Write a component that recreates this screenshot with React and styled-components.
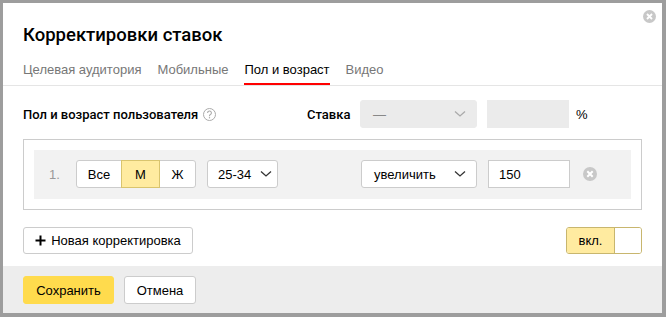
import React from 'react'
import styled, { createGlobalStyle } from 'styled-components';

const GlobalStyle = createGlobalStyle`
    html, body {
        margin: 0;
        padding: 0;
        background: #9d9d9d;
    }
    * {
        box-sizing: border-box;
    }
`;

const Backdrop = styled.div`
    width: 666px;
    height: 317px;
    padding: 3px 4px 4px 3px;
    background: #9d9d9d;
    font-family: "Liberation Sans", Arial, sans-serif;
    font-size: 13px;
    color: #000;
`;

const Modal = styled.div`
    position: relative;
    width: 659px;
    height: 310px;
    background: #fff;
    display: flex;
    flex-direction: column;
`;

const CloseButton = styled.button`
    position: absolute;
    top: 7px;
    right: 6px;
    width: 13px;
    height: 13px;
    padding: 0;
    border: 0;
    background: none;
    display: flex;
`;

const Header = styled.div`
    padding: 21px 20px 0;
    border-bottom: 1px solid #e5e5e5;
`;

const Title = styled.h2`
    margin: 0;
    font-family: Roboto, "Liberation Sans", sans-serif;
    font-size: 18.5px;
    line-height: 22px;
    font-weight: 500;
`;

const Tabs = styled.div`
    display: flex;
    gap: 16px;
    margin-top: 12px;
`;

const Tab = styled.div`
    padding: 4px 0 6px;
    line-height: 15px;
    color: ${({active}) => active ? '#000' : '#777'};
    border-bottom: 2px solid ${({active}) => active ? '#f00' : 'transparent'};
`;

const Body = styled.div`
    padding: 14px 20px 0;
`;

const TopRow = styled.div`
    display: flex;
    align-items: center;
    height: 28px;
`;

const FieldLabel = styled.div`
    flex: 0 0 ${({width}) => width}px;
    display: flex;
    align-items: center;
    gap: 5px;
    font-family: Roboto, "Liberation Sans", sans-serif;
    font-weight: 500;
`;

const Select = styled.div`
    width: ${({width}) => width}px;
    height: 28px;
    border-radius: 3px;
    display: flex;
    align-items: center;
    justify-content: space-between;
    padding: 0 ${({compact}) => compact ? '5px 0 10px' : '10px 0 12px'};
    background: ${({disabled}) => disabled ? '#ebebeb' : '#fff'};
    border: 1px solid ${({disabled}) => disabled ? '#ebebeb' : '#ccc'};
    color: ${({disabled}) => disabled ? '#888' : '#000'};
`;

const Input = styled.div`
    width: 82px;
    height: 28px;
    margin-left: ${({gap}) => gap}px;
    display: flex;
    align-items: center;
    padding: 0 10px;
    background: ${({disabled}) => disabled ? '#ebebeb' : '#fff'};
    border: 1px solid ${({disabled}) => disabled ? '#ebebeb' : '#ccc'};
`;

const Percent = styled.span`
    margin-left: 7px;
`;

const Box = styled.div`
    margin-top: 11px;
    border: 1px solid #ccc;
    padding: 10px;
`;

const RuleRow = styled.div`
    display: flex;
    align-items: center;
    background: #f2f2f2;
    padding: 10px 0 11px 15px;
`;

const Number = styled.span`
    width: 27px;
    color: #999;
`;

const Segments = styled.div`
    display: flex;
    height: 28px;
    margin-right: 11px;
`;

const Segment = styled.div`
    width: ${({width}) => width}px;
    display: flex;
    align-items: center;
    justify-content: center;
    background: ${({active}) => active ? '#ffeba0' : '#fff'};
    border: 1px solid ${({active}) => active ? '#d9c46e' : '#ccc'};
    margin-left: -1px;
    position: relative;
    z-index: ${({active}) => active ? 1 : 0};
    &:first-child {
        margin-left: 0;
        border-radius: 3px 0 0 3px;
    }
    &:last-child {
        border-radius: 0 3px 3px 0;
    }
`;

const Spacer = styled.div`
    flex: 0 0 ${({width}) => width}px;
`;

const RemoveButton = styled.div`
    margin-left: 13px;
    display: flex;
`;

const BottomRow = styled.div`
    display: flex;
    justify-content: space-between;
    align-items: center;
    margin-top: 17px;
`;

const Button = styled.button`
    height: ${({tall}) => tall ? 28 : 27}px;
    width: ${({width}) => width}px;
    padding: 0;
    display: flex;
    align-items: center;
    justify-content: center;
    gap: 5px;
    font-family: inherit;
    font-size: 13px;
    color: #000;
    border-radius: 3px;
    background: ${({primary}) => primary ? '#ffdb4d' : '#fff'};
    border: 1px solid ${({primary}) => primary ? '#ffdb4d' : '#ccc'};
`;

const Toggle = styled.div`
    display: flex;
    width: 76px;
    height: 27px;
    border: 1px solid #c8b66e;
    border-radius: 3px;
    overflow: hidden;
`;

const ToggleOn = styled.div`
    flex: 0 0 48px;
    display: flex;
    align-items: center;
    justify-content: center;
    background: #ffeba0;
    border-right: 1px solid #c8b66e;
`;

const ToggleOff = styled.div`
    flex: 1;
    background: #fff;
`;

const Footer = styled.div`
    margin-top: auto;
    height: 47px;
    background: #ededed;
    display: flex;
    gap: 10px;
    padding: 10px 20px 0;
`;

const Chevron = ({color}) => (
    <svg width="12" height="8" viewBox="0 0 12 8">
        <path d="M1 1.5 L6 6 L11 1.5" fill="none" stroke={color} strokeWidth="1.3" />
    </svg>
);

const ClearIcon = ({size}) => (
    <svg width={size} height={size} viewBox="0 0 14 14">
        <circle cx="7" cy="7" r="7" fill="#c8c8c8" />
        <path d="M4.3 4.3 L9.7 9.7 M9.7 4.3 L4.3 9.7" stroke="#fff" strokeWidth="2" />
    </svg>
);

const HelpIcon = () => (
    <svg width="13" height="13" viewBox="0 0 13 13">
        <circle cx="6.5" cy="6.5" r="6" fill="none" stroke="#aaa" />
        <path d="M4.6 5 a1.9 1.9 0 1 1 2.6 1.7 c-0.5 0.2 -0.7 0.5 -0.7 1.1 v0.4" fill="none" stroke="#aaa" strokeWidth="1.1" />
        <circle cx="6.5" cy="9.8" r="0.7" fill="#aaa" />
    </svg>
);

const PlusIcon = () => (
    <svg width="11" height="11" viewBox="0 0 11 11">
        <path d="M5.5 0.5 V10.5 M0.5 5.5 H10.5" stroke="#000" strokeWidth="2" />
    </svg>
);

export default function App() {
    return (
        <Backdrop>
            <GlobalStyle />
            <Modal>
                <CloseButton><ClearIcon size={13} /></CloseButton>
                <Header>
                    <Title>Корректировки ставок</Title>
                    <Tabs>
                        <Tab>Целевая аудитория</Tab>
                        <Tab>Мобильные</Tab>
                        <Tab active>Пол и возраст</Tab>
                        <Tab>Видео</Tab>
                    </Tabs>
                </Header>
                <Body>
                    <TopRow>
                        <FieldLabel width={284}>Пол и возраст пользователя <HelpIcon /></FieldLabel>
                        <FieldLabel width={53}>Ставка</FieldLabel>
                        <Select width={117} disabled>
                            <span>—</span>
                            <Chevron color="#aaa" />
                        </Select>
                        <Input disabled gap={10} />
                        <Percent>%</Percent>
                    </TopRow>
                    <Box>
                        <RuleRow>
                            <Number>1.</Number>
                            <Segments>
                                <Segment width={46}>Все</Segment>
                                <Segment width={39} active>М</Segment>
                                <Segment width={37}>Ж</Segment>
                            </Segments>
                            <Select width={71} compact>
                                <span>25-34</span>
                                <Chevron color="#333" />
                            </Select>
                            <Spacer width={83} />
                            <Select width={116}>
                                <span>увеличить</span>
                                <Chevron color="#333" />
                            </Select>
                            <Input gap={11}>150</Input>
                            <RemoveButton><ClearIcon size={14} /></RemoveButton>
                        </RuleRow>
                    </Box>
                    <BottomRow>
                        <Button width={170}><PlusIcon />Новая корректировка</Button>
                        <Toggle>
                            <ToggleOn>вкл.</ToggleOn>
                            <ToggleOff />
                        </Toggle>
                    </BottomRow>
                </Body>
                <Footer>
                    <Button primary tall width={91}>Сохранить</Button>
                    <Button tall width={72}>Отмена</Button>
                </Footer>
            </Modal>
        </Backdrop>
    )
}
